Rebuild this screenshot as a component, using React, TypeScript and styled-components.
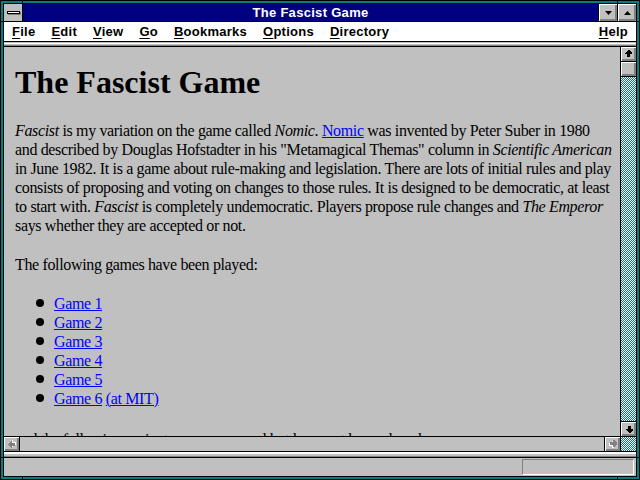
import React from 'react';
import styled, { createGlobalStyle, css } from 'styled-components';

const GlobalStyle = createGlobalStyle`
  html, body {
    margin: 0;
    padding: 0;
    background: #008080;
  }
  body {
    width: 640px;
    height: 480px;
    overflow: hidden;
  }
`;

const dither = css`
  background-color: #ffffff;
  background-image: repeating-conic-gradient(#008080 0 25%, #ffffff 0 50%);
  background-size: 2px 2px;
`;

const bevel = css`
  background: #c0c0c0;
  box-shadow: inset 1px 1px #ffffff, inset -1px -1px #808080, inset -2px -2px #808080;
`;

const Frame = styled.div`
  position: relative;
  box-sizing: border-box;
  width: 640px;
  height: 480px;
  background: #008080;
  border: 1px solid #000;
  padding: 2px;
`;

const Tick = styled.div<{ $x: number; $y: number; $w: number; $h: number }>`
  position: absolute;
  left: ${(p) => p.$x - 1}px;
  top: ${(p) => p.$y - 1}px;
  width: ${(p) => p.$w}px;
  height: ${(p) => p.$h}px;
  background: #000;
`;

const Inner = styled.div`
  box-sizing: border-box;
  height: 100%;
  border: 1px solid #000;
  display: flex;
  flex-direction: column;
  background: #c0c0c0;
  font-family: 'Liberation Sans', Arial, sans-serif;
`;

const TitleBar = styled.div`
  display: flex;
  height: 17px;
  flex: none;
  border-bottom: 1px solid #000;
  background: #000080;
`;

const SysBox = styled.div`
  width: 18px;
  border-right: 1px solid #000;
  background: #c0c0c0;
  display: flex;
  align-items: center;
  justify-content: center;
`;

const SysBar = styled.div`
  width: 11px;
  height: 1px;
  background: #fff;
  border: 1px solid #000;
  box-shadow: 1px 1px #808080;
  margin-top: -1px;
`;

const Title = styled.div`
  flex: 1;
  color: #fff;
  font-weight: bold;
  font-size: 13px;
  line-height: 17px;
  letter-spacing: 0.3px;
  text-align: center;
`;

const TitleButton = styled.div`
  width: 18px;
  border-left: 1px solid #000;
  display: flex;
  align-items: center;
  justify-content: center;
  ${bevel}
`;

const MenuBar = styled.div`
  display: flex;
  flex: none;
  height: 19px;
  align-items: center;
  padding: 0;
  background: #fff;
  border-bottom: 1px solid #000;
  font-weight: bold;
  font-size: 13px;
  letter-spacing: 0.25px;
`;

const MenuItem = styled.span<{ $end?: boolean }>`
  padding: 0 8px;
  margin-left: ${(p) => (p.$end ? 'auto' : '0')};
  u {
    text-decoration-thickness: 1px;
    text-underline-offset: 2px;
  }
`;

const TopLedge = styled.div`
  flex: none;
  height: 1px;
  margin-top: 1px;
  border-top: 1px solid #fff;
  border-bottom: 1px solid #808080;
`;

const Main = styled.div`
  flex: 1;
  min-height: 0;
  display: flex;
  border-top: 1px solid #000;
`;

const Page = styled.div`
  flex: 1;
  overflow: hidden;
  padding: 0 8px 0 11px;
  font-family: 'Liberation Serif', 'Times New Roman', serif;
  font-size: 16px;
  line-height: 19px;
  letter-spacing: -0.35px;
  color: #000;

  h1 {
    font-size: 32px;
    line-height: 32px;
    font-weight: bold;
    letter-spacing: 0;
    margin: 19px 0 23px;
  }
  p {
    margin: 0 0 20px;
  }
  a {
    color: #0000ff;
    text-decoration: underline;
    text-decoration-thickness: 1px;
  }
`;

const GameList = styled.ul`
  list-style: none;
  margin: 0 0 22px;
  padding: 0 0 0 39px;
`;

const GameItem = styled.li`
  position: relative;
  &::before {
    content: '';
    position: absolute;
    left: -18px;
    top: 5px;
    width: 8px;
    height: 8px;
    border-radius: 50%;
    background: #000;
  }
`;

const VScroll = styled.div`
  width: 15px;
  flex: none;
  display: flex;
  flex-direction: column;
  border-left: 1px solid #000;
  ${dither}
`;

const ScrollButton = styled.div<{ $edge: 'top' | 'bottom' | 'left' | 'right' }>`
  flex: none;
  width: 15px;
  height: 14px;
  display: flex;
  align-items: center;
  justify-content: center;
  ${bevel}
  ${(p) => `border-${p.$edge}: 1px solid #000;`}
`;

const Thumb = styled.div`
  flex: none;
  height: 14px;
  border-bottom: 1px solid #000;
  ${bevel}
`;

const Track = styled.div`
  flex: 1;
`;

const HScroll = styled.div`
  flex: none;
  display: flex;
  height: 14px;
  border-top: 1px solid #000;
  border-bottom: 1px solid #000;
`;

const Corner = styled.div`
  width: 15px;
  border-left: 1px solid #000;
  ${dither}
`;

const BottomLedge = styled.div`
  flex: none;
  height: 2px;
  border-top: 2px solid #fff;
  border-bottom: 1px solid #808080;
`;

const StatusBar = styled.div`
  flex: none;
  height: 18px;
  border-top: 1px solid #000;
  display: flex;
  justify-content: flex-end;
  align-items: center;
  padding-right: 2px;
`;

const StatusBox = styled.div`
  box-sizing: border-box;
  width: 112px;
  height: 16px;
  border-top: 1px solid #808080;
  border-left: 1px solid #808080;
  border-bottom: 1px solid #fff;
  border-right: 1px solid #fff;
`;

const ArrowSvg = styled.svg<{ $rot: number }>`
  display: block;
  transform: rotate(${(p) => p.$rot}deg);
  shape-rendering: crispEdges;
`;

const arrowPath = 'M3 0H4L7 3V4H5V7H2V4H0V3Z';

const Arrow: React.FC<{ dir: 'up' | 'down' | 'left' | 'right'; disabled?: boolean }> = ({
  dir,
  disabled,
}) => {
  const rot = { up: 0, right: 90, down: 180, left: 270 }[dir];
  return (
    <ArrowSvg width="8" height="8" viewBox="0 0 8 8" $rot={rot}>
      {disabled && <path d={arrowPath} fill="#fff" transform="translate(1 1)" />}
      <path d={arrowPath} fill={disabled ? '#808080' : '#000'} />
    </ArrowSvg>
  );
};

const Caret: React.FC<{ up?: boolean }> = ({ up }) => (
  <svg width="7" height="4" viewBox="0 0 7 4" style={{ display: 'block' }}>
    <path d={up ? 'M3.5 0L7 4H0Z' : 'M0 0H7L3.5 4Z'} fill="#000" />
  </svg>
);

const menus = ['File', 'Edit', 'View', 'Go', 'Bookmarks', 'Options', 'Directory'];

const ticks = [
  { x: 22, y: 0, w: 1, h: 4 },
  { x: 617, y: 0, w: 1, h: 4 },
  { x: 22, y: 476, w: 1, h: 4 },
  { x: 617, y: 476, w: 1, h: 4 },
  { x: 0, y: 21, w: 4, h: 1 },
  { x: 636, y: 21, w: 4, h: 1 },
  { x: 0, y: 457, w: 4, h: 1 },
  { x: 636, y: 457, w: 4, h: 1 },
];

const games = ['Game 1', 'Game 2', 'Game 3', 'Game 4', 'Game 5'];

export default function App() {
  return (
    <>
      <GlobalStyle />
      <Frame>
        {ticks.map((t, i) => (
          <Tick key={i} $x={t.x} $y={t.y} $w={t.w} $h={t.h} />
        ))}
        <Inner>
          <TitleBar>
            <SysBox>
              <SysBar />
            </SysBox>
            <Title>The Fascist Game</Title>
            <TitleButton>
              <Caret />
            </TitleButton>
            <TitleButton>
              <Caret up />
            </TitleButton>
          </TitleBar>
          <MenuBar>
            {menus.map((m) => (
              <MenuItem key={m}>
                <u>{m[0]}</u>
                {m.slice(1)}
              </MenuItem>
            ))}
            <MenuItem $end>
              <u>H</u>elp
            </MenuItem>
          </MenuBar>
          <TopLedge />
          <Main>
            <Page>
              <h1>The Fascist Game</h1>
              <p>
                <i>Fascist</i> is my variation on the game called <i>Nomic</i>.{' '}
                <a href="#nomic">Nomic</a> was invented by Peter Suber in 1980 and described by
                Douglas Hofstadter in his "Metamagical Themas" column in <i>Scientific American</i>{' '}
                in June 1982. It is a game about rule-making and legislation. There are lots of
                initial rules and play consists of proposing and voting on changes to those rules.
                It is designed to be democratic, at least to start with. <i>Fascist</i> is
                completely undemocratic. Players propose rule changes and <i>The Emperor</i> says
                whether they are accepted or not.
              </p>
              <p>The following games have been played:</p>
              <GameList>
                {games.map((g) => (
                  <GameItem key={g}>
                    <a href="#game">{g}</a>
                  </GameItem>
                ))}
                <GameItem>
                  <a href="#game6">Game 6</a> <a href="#mit">(at MIT)</a>
                </GameItem>
              </GameList>
              <p>and the following variants were proposed but have not been played:</p>
            </Page>
            <VScroll>
              <ScrollButton $edge="bottom">
                <Arrow dir="up" />
              </ScrollButton>
              <Thumb />
              <Track />
              <ScrollButton $edge="top">
                <Arrow dir="down" />
              </ScrollButton>
            </VScroll>
          </Main>
          <HScroll>
            <ScrollButton $edge="right">
              <Arrow dir="left" disabled />
            </ScrollButton>
            <Track />
            <ScrollButton $edge="left">
              <Arrow dir="right" disabled />
            </ScrollButton>
            <Corner />
          </HScroll>
          <BottomLedge />
          <StatusBar>
            <StatusBox />
          </StatusBar>
        </Inner>
      </Frame>
    </>
  );
}
